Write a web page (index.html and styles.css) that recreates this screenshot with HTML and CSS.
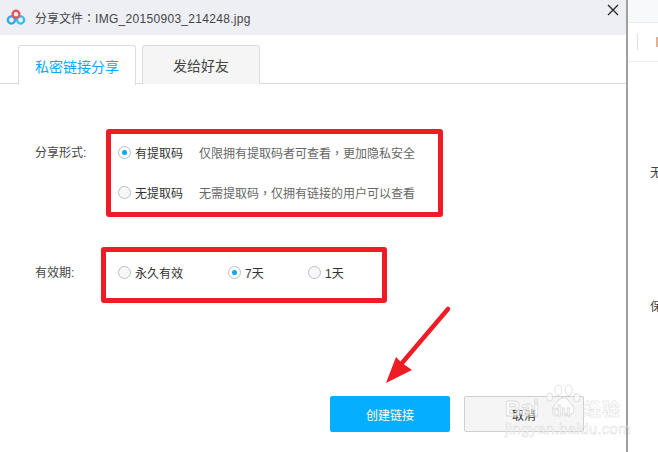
FILE: index.html
```html
<!DOCTYPE html>
<html lang="zh">
<head>
<meta charset="utf-8">
<title>分享文件</title>
<link rel="stylesheet" href="styles.css">
</head>
<body>
<div class="screen">
  <main class="dialog">
    <header class="titlebar">
      <svg class="logo" width="20" height="17" viewBox="0 0 24 20" fill="none">
        <circle cx="6.5" cy="13" r="4.3" stroke="#2fa7f0" stroke-width="2.8"/>
        <circle cx="17.5" cy="13" r="4.3" stroke="#35c0e8" stroke-width="2.8"/>
        <circle cx="12" cy="6" r="4.1" stroke="#e8505b" stroke-width="2.8"/>
      </svg>
      <span class="title">分享文件<span class="punct" lang="zh-Hant">：</span><span class="file">IMG_20150903_214248.jpg</span></span>
      <svg class="close" width="12" height="12" viewBox="0 0 12 12"><path d="M1 1l10 10M11 1L1 11" stroke="#222" stroke-width="1.2"/></svg>
    </header>
    <nav class="tabs">
      <div class="tab active">私密链接分享</div>
      <div class="tab">发给好友</div>
    </nav>
    <section class="form">
      <div class="row row-share">
        <div class="label">分享形式:</div>
        <div class="box box-share">
          <div class="opt"><span class="radio on"></span><span class="name">有提取码</span><span class="desc">仅限拥有提取码者可查看<span class="punct" lang="zh-Hant">，</span>更加隐私安全</span></div>
          <div class="opt"><span class="radio"></span><span class="name">无提取码</span><span class="desc">无需提取码<span class="punct" lang="zh-Hant">，</span>仅拥有链接的用户可以查看</span></div>
        </div>
      </div>
      <div class="row row-valid">
        <div class="label">有效期:</div>
        <div class="box box-valid">
          <div class="opt w-forever"><span class="radio"></span><span class="name">永久有效</span></div>
          <div class="opt w-seven"><span class="radio on"></span><span class="name">7天</span></div>
          <div class="opt"><span class="radio"></span><span class="name">1天</span></div>
        </div>
      </div>
    </section>
    <footer class="actions">
      <div class="btn primary">创建链接</div>
      <div class="btn">取消</div>
    </footer>
  </main>
  <aside class="side">
    <div class="side-top"></div>
    <div class="side-tool"><span class="sep"></span><span class="tick"></span></div>
    <div class="side-text first">无</div>
    <div class="side-text second">保</div>
  </aside>
  <svg class="arrow" width="80" height="90" viewBox="0 0 80 90">
    <path d="M68 7L22 61" stroke="#ee1c25" stroke-width="4.5" stroke-linecap="round"/>
    <path d="M6 81L16 55L22 61L32 68Z" fill="#ee1c25"/>
  </svg>
  <div class="watermark">
    <svg class="paw" width="37" height="36" viewBox="0 0 64 56" fill="#fff" stroke="#dcdcdc" stroke-width="2">
      <ellipse cx="8" cy="23" rx="5" ry="7"/>
      <ellipse cx="23" cy="11" rx="6" ry="9"/>
      <ellipse cx="41" cy="11" rx="6" ry="9"/>
      <ellipse cx="55" cy="24" rx="5" ry="7"/>
      <path d="M32 24c8 0 10 8 15 13 6 6 3 16-5 16-4 0-6-2-10-2s-7 2-11 2c-8 0-11-10-5-16 5-5 8-13 16-13z"/>
    </svg>
    <div class="wm-main"><span class="wm-bai">Bai</span><span class="wm-du">du</span><span class="wm-cn">经验</span></div>
    <div class="wm-sub">jingyan.baidu.com</div>
  </div>
</div>
</body>
</html>
```
FILE: styles.css
```css
* { box-sizing: border-box; }
html, body { margin: 0; padding: 0; }
body { font-family: "Liberation Sans", "Noto Sans CJK SC", sans-serif; font-size: 12px; color: #333; background: #fff; }
.screen { position: relative; width: 658px; height: 452px; overflow: hidden; display: flex; }
.dialog { width: 626px; height: 452px; display: flex; flex-direction: column; flex: none; }
.titlebar { height: 35px; background: #eeeff4; display: flex; align-items: center; padding: 0 0 0 6px; position: relative; }
.logo { margin-right: 9px; margin-top: -1px; }
.title { font-size: 12px; color: #444; margin-top: -1px; }
.punct { font-family: "Noto Sans CJK TC", sans-serif; }
.file { letter-spacing: .3px; }
.close { position: absolute; left: 607px; top: 4px; }
.tabs { height: 49px; display: flex; gap: 6px; padding: 10px 0 0 18px; border-bottom: 1px solid #d9d9d9; }
.tab { width: 118px; height: 39px; border: 1px solid #dcdcdc; border-bottom: none; border-radius: 3px 3px 0 0; background: #f5f5f5; display: flex; align-items: center; justify-content: center; font-size: 14px; color: #444; }
.tab.active { background: #fff; color: #06a7ff; height: 40px; }
.form { display: flex; flex-direction: column; padding: 45px 0 0 35px; }
.row { display: flex; align-items: flex-start; }
.label { width: 72px; color: #444; flex: none; line-height: 20px; }
.row-share .label { margin-top: 14px; }
.row-valid .label { margin-top: 16px; }
.box { border: 5px solid #ee1c25; border-radius: 3px; }
.box-share { width: 337px; height: 88px; padding: 8px 0 0 7px; display: flex; flex-direction: column; gap: 20px; margin-left: -1px; }
.row-valid { margin-top: 30px; }
.box-valid { width: 286px; height: 56px; padding: 0 0 5px 12px; display: flex; align-items: center; margin-left: -6px; }
.opt { display: flex; align-items: center; height: 20px; }
.radio { width: 13px; height: 13px; border: 1px solid #b9bdc4; border-radius: 50%; background: #f6f8fb; flex: none; margin-right: 4px; position: relative; }
.radio.on { background: #fff; }
.radio.on::after { content: ""; position: absolute; left: 3px; top: 3px; width: 5px; height: 5px; border-radius: 50%; background: #06a7ff; }
.name { color: #333; }
.desc { margin-left: 16px; color: #666; }
.w-forever { width: 110px; }
.w-seven { width: 80px; }
.actions { display: flex; gap: 14px; padding: 93px 0 0 330px; }
.btn { width: 120px; height: 36px; border: 1px solid #cfcfcf; border-radius: 2px; background: #f5f5f5; display: flex; align-items: center; justify-content: center; color: #333; }
.btn.primary { background: #06aeff; border-color: #06aeff; color: #fff; }
.side { flex: none; width: 32px; height: 452px; border-left: 2px solid #a0a0a0; background: #fff; position: relative; }
.side-top { height: 23px; background: #f8f9fb; border-bottom: 1px solid #eee; }
.side-tool { height: 39px; border-bottom: 1px solid #eee; position: relative; display: flex; align-items: center; padding-left: 9px; gap: 18px; }
.sep { width: 1px; height: 16px; background: #ddd; }
.tick { width: 2px; height: 10px; background: #e0b090; }
.side-text { position: absolute; left: 22px; color: #444; }
.first { top: 163px; }
.second { top: 297px; }
.arrow { position: absolute; left: 380px; top: 302px; }
.watermark { position: absolute; left: 505px; top: 399px; width: 120px; display: flex; flex-direction: column; color: #fff; opacity: .75; -webkit-text-stroke: .8px #d4d4d4; }
.paw { position: absolute; left: 40px; top: -17px; }
.wm-main { position: relative; display: flex; align-items: baseline; height: 20px; line-height: 20px; font-weight: bold; white-space: nowrap; }
.wm-bai { font-size: 22px; width: 47px; }
.wm-du { font-size: 15px; width: 31px; }
.wm-cn { font-size: 18px; letter-spacing: 1px; -webkit-text-stroke: .4px #cfcfcf; }
.wm-sub { position: relative; margin-top: 2px; font-size: 15px; line-height: 15px; letter-spacing: .3px; white-space: nowrap; -webkit-text-stroke: .5px #d4d4d4; }
```
